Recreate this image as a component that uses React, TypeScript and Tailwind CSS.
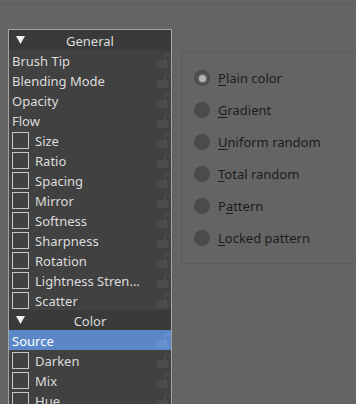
import React from "react";

type Row =
  | { kind: "header"; label: string }
  | { kind: "plain"; label: string; selected?: boolean }
  | { kind: "check"; label: string };

const rows: Row[] = [
  { kind: "header", label: "General" },
  { kind: "plain", label: "Brush Tip" },
  { kind: "plain", label: "Blending Mode" },
  { kind: "plain", label: "Opacity" },
  { kind: "plain", label: "Flow" },
  { kind: "check", label: "Size" },
  { kind: "check", label: "Ratio" },
  { kind: "check", label: "Spacing" },
  { kind: "check", label: "Mirror" },
  { kind: "check", label: "Softness" },
  { kind: "check", label: "Sharpness" },
  { kind: "check", label: "Rotation" },
  { kind: "check", label: "Lightness Stren..." },
  { kind: "check", label: "Scatter" },
  { kind: "header", label: "Color" },
  { kind: "plain", label: "Source", selected: true },
  { kind: "check", label: "Darken" },
  { kind: "check", label: "Mix" },
  { kind: "check", label: "Hue" },
];

// [before, mnemonic letter, after]
const options: [string, string, string][] = [
  ["", "P", "lain color"],
  ["", "G", "radient"],
  ["", "U", "niform random"],
  ["", "T", "otal random"],
  ["P", "a", "ttern"],
  ["", "L", "ocked pattern"],
];

function Lock({ selected }: { selected?: boolean }) {
  const c = selected ? "#6690cf" : "#4b4b4b";
  return (
    <svg width="14" height="16" viewBox="0 0 14 16" className="absolute right-[1px] top-[2px]">
      <path d="M9 8 V4 a2 2 0 0 1 4 0 V5" fill="none" stroke={c} strokeWidth="2" />
      <rect x="0.5" y="8" width="12" height="8" rx="1" fill={c} />
    </svg>
  );
}

function Triangle() {
  return (
    <svg width="9" height="9" viewBox="0 0 9 9" className="absolute left-[7px] top-[5px]">
      <polygon points="0,1 9,1 4.5,9" fill="#f2f2f2" />
    </svg>
  );
}

function ListRow({ row }: { row: Row }) {
  if (row.kind === "header") {
    return (
      <div className="relative h-5 bg-[#3a3a3a] pt-px text-center leading-5 text-[#dcdcdc]">
        <Triangle />
        {row.label}
      </div>
    );
  }
  if (row.kind === "plain") {
    return (
      <div
        className={`relative h-5 pl-[3px] pt-px leading-5 ${
          row.selected ? "bg-[#5b87c8] text-white" : "text-[#dcdcdc]"
        }`}
      >
        {row.label}
        <Lock selected={row.selected} />
      </div>
    );
  }
  return (
    <div className="relative flex h-5 items-center pl-[3px] text-[#dcdcdc]">
      <span className="box-border h-[17px] w-[17px] shrink-0 border border-[#c8c8c8]" />
      <span className="ml-[6px] mt-[2px] leading-5">{row.label}</span>
      <Lock />
    </div>
  );
}

export default function App() {
  return (
    <div
      className="relative h-[404px] w-[356px] overflow-hidden bg-[#646464] text-[13px]"
      style={{ fontFamily: '"Noto Sans", "Open Sans", sans-serif' }}
    >
      <div className="mt-1 h-px bg-[#5b5b5b]" />
      <div className="flex pt-6 pl-2">
        <div className="h-[400px] w-[164px] shrink-0 overflow-hidden border-x border-t border-[#a4a4a4] bg-[#414141]">
          {rows.map((r) => (
            <ListRow key={r.label} row={r} />
          ))}
        </div>
        <div className="mt-[23px] ml-[9px] h-[212px] w-[200px] shrink-0 border border-[#5a5a5a] pt-[17px] pl-[12px]">
          {options.map(([a, m, b], i) => (
            <div key={i} className="flex h-8 items-start">
              <span className="flex h-4 w-4 items-center justify-center rounded-full bg-[#4b4b4b]">
                {i === 0 && (
                  <span className="flex h-[11px] w-[11px] items-center justify-center rounded-full bg-[#5e5e5e]">
                    <span className="h-[7px] w-[7px] rounded-full bg-[#b4b4b4]" />
                  </span>
                )}
              </span>
              <span className="ml-[8px] -mt-[2px] leading-5 text-[#1c1c1c]">
                {a}
                <span className="underline underline-offset-2">{m}</span>
                {b}
              </span>
            </div>
          ))}
        </div>
      </div>
    </div>
  );
}
